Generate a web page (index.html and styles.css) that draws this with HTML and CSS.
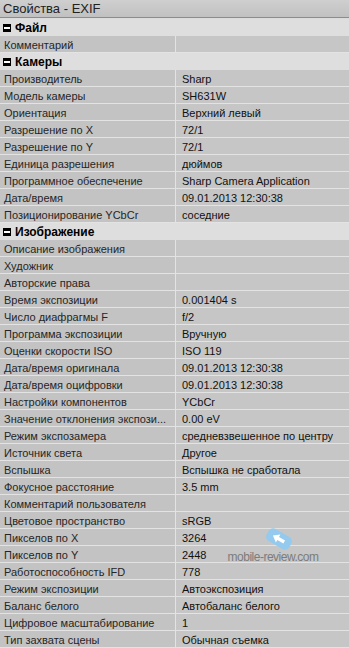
FILE: index.html
```html
<!DOCTYPE html>
<html lang="ru">
<head>
<meta charset="utf-8">
<title>Свойства - EXIF</title>
<link rel="stylesheet" href="styles.css">
</head>
<body>
<div class="win">
  <div class="title">Свойства - EXIF</div>
  <div class="grid">
    <div class="sec"><span class="minus"></span>Файл</div>
    <div class="k">Комментарий</div><div class="v"></div>
    <div class="sec"><span class="minus"></span>Камеры</div>
    <div class="k">Производитель</div><div class="v">Sharp</div>
    <div class="k">Модель камеры</div><div class="v">SH631W</div>
    <div class="k">Ориентация</div><div class="v">Верхний левый</div>
    <div class="k">Разрешение по X</div><div class="v">72/1</div>
    <div class="k">Разрешение по Y</div><div class="v">72/1</div>
    <div class="k">Единица разрешения</div><div class="v">дюймов</div>
    <div class="k">Программное обеспечение</div><div class="v">Sharp Camera Application</div>
    <div class="k">Дата/время</div><div class="v">09.01.2013 12:30:38</div>
    <div class="k">Позиционирование YCbCr</div><div class="v">соседние</div>
    <div class="sec"><span class="minus"></span>Изображение</div>
    <div class="k">Описание изображения</div><div class="v"></div>
    <div class="k">Художник</div><div class="v"></div>
    <div class="k">Авторские права</div><div class="v"></div>
    <div class="k">Время экспозиции</div><div class="v">0.001404 s</div>
    <div class="k">Число диафрагмы F</div><div class="v">f/2</div>
    <div class="k">Программа экспозиции</div><div class="v">Вручную</div>
    <div class="k">Оценки скорости ISO</div><div class="v">ISO 119</div>
    <div class="k">Дата/время оригинала</div><div class="v">09.01.2013 12:30:38</div>
    <div class="k">Дата/время оцифровки</div><div class="v">09.01.2013 12:30:38</div>
    <div class="k">Настройки компонентов</div><div class="v">YCbCr</div>
    <div class="k">Значение отклонения экспози...</div><div class="v">0.00 eV</div>
    <div class="k">Режим экспозамера</div><div class="v">средневзвешенное по центру</div>
    <div class="k">Источник света</div><div class="v">Другое</div>
    <div class="k">Вспышка</div><div class="v">Вспышка не сработала</div>
    <div class="k">Фокусное расстояние</div><div class="v">3.5 mm</div>
    <div class="k">Комментарий пользователя</div><div class="v"></div>
    <div class="k">Цветовое пространство</div><div class="v">sRGB</div>
    <div class="k">Пикселов по X</div><div class="v">3264</div>
    <div class="k">Пикселов по Y</div><div class="v">2448</div>
    <div class="k">Работоспособность IFD</div><div class="v">778</div>
    <div class="k">Режим экспозиции</div><div class="v">Автоэкспозиция</div>
    <div class="k">Баланс белого</div><div class="v">Автобаланс белого</div>
    <div class="k">Цифровое масштабирование</div><div class="v">1</div>
    <div class="k">Тип захвата сцены</div><div class="v">Обычная съемка</div>
  </div>
  <div class="wm">
    <svg class="wm-tag" width="30" height="22" viewBox="0 0 30 22">
      <g transform="rotate(30 15 11)">
        <rect x="2" y="4" width="26" height="14" rx="5" fill="#94caee"/>
        <path d="M8 11 L14 6.5 L14 9.3 L21 9.3 L21 12.7 L14 12.7 L14 15.5 Z" fill="#ffffff"/>
      </g>
    </svg>
    <span class="wm-text">mobile-review.com</span>
  </div>
</div>
</body>
</html>
```

FILE: styles.css
```css
html, body {
  margin: 0;
  padding: 0;
}
body {
  width: 349px;
  height: 648px;
  overflow: hidden;
  background: #c4c4c4;
  font-family: "Liberation Sans", Arial, sans-serif;
}
.win {
  position: relative;
  width: 349px;
}
.title {
  height: 18px;
  box-sizing: border-box;
  padding: 1px 0 0 3px;
  line-height: 16px;
  font-size: 13px;
  color: #222;
  background: linear-gradient(#cfcfcf, #c1c1c1);
  border-bottom: 1px solid #8c8c8c;
}
.grid {
  display: grid;
  grid-template-columns: 176px 1fr;
  grid-auto-rows: 17px;
  padding-top: 1px;
  background: #dcdcdc;
}
.sec {
  grid-column: 1 / -1;
  display: flex;
  align-items: center;
  gap: 4px;
  padding: 1px 0 0 3px;
  box-sizing: border-box;
  background: #dedede;
  font-size: 12px;
  font-weight: bold;
  color: #000;
  line-height: 16px;
}
.minus {
  position: relative;
  width: 8px;
  height: 8px;
  background: #000;
  flex: none;
}
.minus::after {
  content: "";
  position: absolute;
  left: 1px;
  right: 1px;
  top: 3px;
  height: 2px;
  background: #fff;
}
.k, .v {
  box-sizing: border-box;
  height: 17px;
  padding-top: 2px;
  line-height: 15px;
  font-size: 11px;
  white-space: nowrap;
  overflow: hidden;
  border-bottom: 1px solid #e3e3e3;
}
.k {
  padding-left: 4px;
  background: #c3c3c3;
  color: #262626;
  border-right: 1px solid #e3e3e3;
}
.v {
  padding-left: 6px;
  background: #c6c6c6;
  color: #111;
}
.wm {
  position: absolute;
  left: 226px;
  top: 528px;
  width: 94px;
  display: flex;
  flex-direction: column;
  align-items: center;
}
.wm-tag {
  display: block;
  margin-left: 12px;
}
.wm-text {
  font-size: 12px;
  color: #7c7c7c;
  letter-spacing: -0.5px;
  line-height: 14px;
}
```
